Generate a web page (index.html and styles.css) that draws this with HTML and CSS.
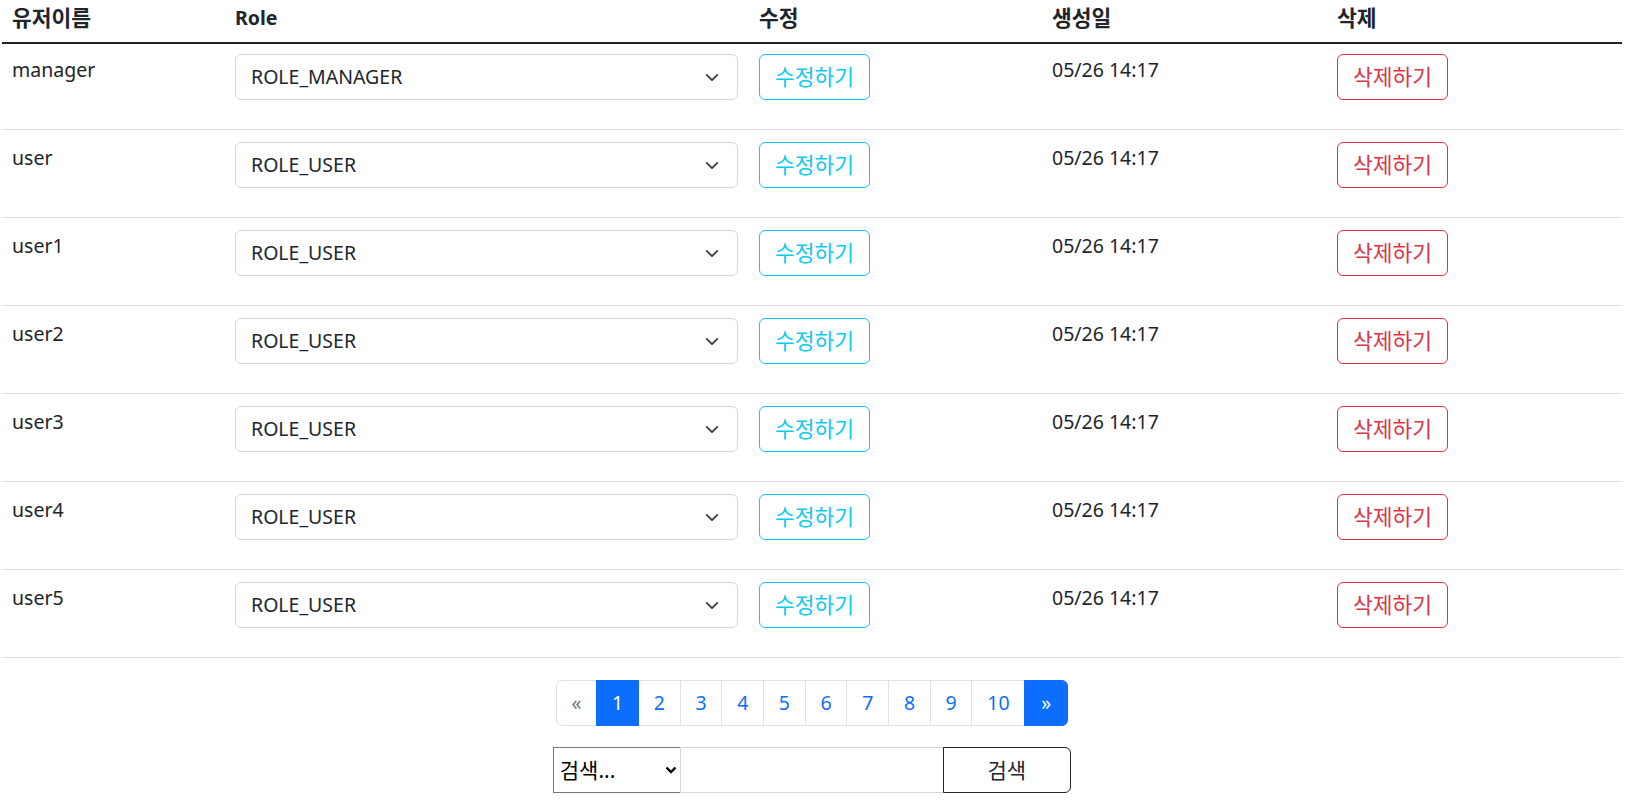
FILE: index.html
```html
<!DOCTYPE html>
<html lang="ko">
<head>
<meta charset="utf-8">
<title>유저 관리</title>
<link rel="stylesheet" href="styles.css">
</head>
<body>
<div class="page">
  <div class="users">
    <div class="users-head">
      <div class="cell ko">유저이름</div>
      <div class="cell">Role</div>
      <div class="cell ko">수정</div>
      <div class="cell ko">생성일</div>
      <div class="cell ko">삭제</div>
    </div>

    <div class="users-row">
      <div class="cell">manager</div>
      <div class="cell"><div class="select-wrap"><select class="role-select"><option>ROLE_MANAGER</option><option>ROLE_USER</option></select><svg class="chev" viewBox="0 0 16 10"><path d="M2 2l6 6 6-6"/></svg></div></div>
      <div class="cell"><button class="btn btn-info">수정하기</button></div>
      <div class="cell">05/26 14:17</div>
      <div class="cell"><button class="btn btn-danger">삭제하기</button></div>
    </div>

    <div class="users-row">
      <div class="cell">user</div>
      <div class="cell"><div class="select-wrap"><select class="role-select"><option>ROLE_USER</option><option>ROLE_MANAGER</option></select><svg class="chev" viewBox="0 0 16 10"><path d="M2 2l6 6 6-6"/></svg></div></div>
      <div class="cell"><button class="btn btn-info">수정하기</button></div>
      <div class="cell">05/26 14:17</div>
      <div class="cell"><button class="btn btn-danger">삭제하기</button></div>
    </div>

    <div class="users-row">
      <div class="cell">user1</div>
      <div class="cell"><div class="select-wrap"><select class="role-select"><option>ROLE_USER</option><option>ROLE_MANAGER</option></select><svg class="chev" viewBox="0 0 16 10"><path d="M2 2l6 6 6-6"/></svg></div></div>
      <div class="cell"><button class="btn btn-info">수정하기</button></div>
      <div class="cell">05/26 14:17</div>
      <div class="cell"><button class="btn btn-danger">삭제하기</button></div>
    </div>

    <div class="users-row">
      <div class="cell">user2</div>
      <div class="cell"><div class="select-wrap"><select class="role-select"><option>ROLE_USER</option><option>ROLE_MANAGER</option></select><svg class="chev" viewBox="0 0 16 10"><path d="M2 2l6 6 6-6"/></svg></div></div>
      <div class="cell"><button class="btn btn-info">수정하기</button></div>
      <div class="cell">05/26 14:17</div>
      <div class="cell"><button class="btn btn-danger">삭제하기</button></div>
    </div>

    <div class="users-row">
      <div class="cell">user3</div>
      <div class="cell"><div class="select-wrap"><select class="role-select"><option>ROLE_USER</option><option>ROLE_MANAGER</option></select><svg class="chev" viewBox="0 0 16 10"><path d="M2 2l6 6 6-6"/></svg></div></div>
      <div class="cell"><button class="btn btn-info">수정하기</button></div>
      <div class="cell">05/26 14:17</div>
      <div class="cell"><button class="btn btn-danger">삭제하기</button></div>
    </div>

    <div class="users-row">
      <div class="cell">user4</div>
      <div class="cell"><div class="select-wrap"><select class="role-select"><option>ROLE_USER</option><option>ROLE_MANAGER</option></select><svg class="chev" viewBox="0 0 16 10"><path d="M2 2l6 6 6-6"/></svg></div></div>
      <div class="cell"><button class="btn btn-info">수정하기</button></div>
      <div class="cell">05/26 14:17</div>
      <div class="cell"><button class="btn btn-danger">삭제하기</button></div>
    </div>

    <div class="users-row">
      <div class="cell">user5</div>
      <div class="cell"><div class="select-wrap"><select class="role-select"><option>ROLE_USER</option><option>ROLE_MANAGER</option></select><svg class="chev" viewBox="0 0 16 10"><path d="M2 2l6 6 6-6"/></svg></div></div>
      <div class="cell"><button class="btn btn-info">수정하기</button></div>
      <div class="cell">05/26 14:17</div>
      <div class="cell"><button class="btn btn-danger">삭제하기</button></div>
    </div>
  </div>

  <nav class="pager">
    <a class="page-link first disabled">«</a>
    <a class="page-link active">1</a>
    <a class="page-link">2</a>
    <a class="page-link">3</a>
    <a class="page-link">4</a>
    <a class="page-link">5</a>
    <a class="page-link">6</a>
    <a class="page-link">7</a>
    <a class="page-link">8</a>
    <a class="page-link">9</a>
    <a class="page-link wide">10</a>
    <a class="page-link last active">»</a>
  </nav>

  <form class="search">
    <div class="search-select-wrap">
      <select class="search-select"><option>검색...</option><option>유저이름</option></select>
      <svg class="search-chev" viewBox="0 0 12 8"><path d="M1.5 1.5l4.5 4.5 4.5-4.5"/></svg>
    </div>
    <input class="search-input" type="text">
    <button class="search-btn" type="button">검색</button>
  </form>
</div>
</body>
</html>
```
FILE: styles.css
```css
* { box-sizing: border-box; }

html, body {
  margin: 0;
  padding: 0;
  background: #fff;
}

body {
  font-family: "Noto Sans", "Noto Sans CJK KR", sans-serif;
  font-size: 19.5px;
  line-height: 30px;
  color: #212529;
}

.page {
  width: 1622px;
  padding-left: 2px;
}

.users-head,
.users-row {
  display: grid;
  grid-template-columns: 223px 524px 293px 285px 295px;
}

.users-head {
  height: 44px;
  border-bottom: 2px solid #212529;
  margin-bottom: -2px;
  font-weight: 700;
}

.users-head .cell {
  padding: 3px 10px 0;
}

.users-head .ko {
  font-size: 21.5px;
}

.users-row {
  height: 88px;
  border-bottom: 1px solid #dee2e6;
}

.users-row .cell {
  padding: 13px 10px 0;
}

.select-wrap {
  position: relative;
  width: 503px;
  margin-top: -1.5px;
}

.role-select {
  display: block;
  width: 100%;
  height: 46px;
  padding: 0 45px 0 15px;
  font: inherit;
  color: #212529;
  background: #fff;
  border: 1px solid #d3d7dc;
  border-radius: 6px;
  appearance: none;
  -webkit-appearance: none;
  outline: none;
}

.chev {
  position: absolute;
  right: 19px;
  top: 19px;
  width: 14px;
  height: 9px;
  pointer-events: none;
  fill: none;
  stroke: #343a40;
  stroke-width: 2;
  stroke-linecap: round;
  stroke-linejoin: round;
}

.btn {
  display: block;
  width: 111px;
  height: 46px;
  margin-top: -1.5px;
  padding: 0;
  font: inherit;
  font-size: 21.5px;
  line-height: 44px;
  text-align: center;
  background: #fff;
  border: 1px solid;
  border-radius: 6px;
  cursor: pointer;
}

.btn-info {
  color: #0dcaf0;
  border-color: #0dcaf0;
}

.btn-danger {
  color: #dc3545;
  border-color: #dc3545;
}

/* pagination */
.pager {
  display: flex;
  justify-content: center;
  margin-top: 21.5px;
  padding-right: 0.5px;
}

.page-link {
  display: block;
  width: 42.7px;
  height: 46px;
  margin-left: -1px;
  line-height: 44px;
  text-align: center;
  color: #0d6efd;
  background: #fff;
  border: 1px solid #dee2e6;
  text-decoration: none;
}

.page-link.first {
  width: 41.7px;
  margin-left: 0;
  border-radius: 6px 0 0 6px;
}

.page-link.wide {
  width: 54px;
}

.page-link.last {
  width: 43.4px;
  border-radius: 0 6px 6px 0;
}

.page-link.disabled {
  color: #6c757d;
}

.page-link.active {
  color: #fff;
  background: #0d6efd;
  border-color: #0d6efd;
  position: relative;
}

/* search */
.search {
  display: flex;
  justify-content: center;
  margin-top: 21px;
  padding-right: 0.5px;
}

.search-select-wrap {
  position: relative;
  width: 128px;
}

.search-select {
  display: block;
  width: 100%;
  height: 46px;
  padding: 0 24px 0 6px;
  font: inherit;
  font-size: 21px;
  color: #000;
  background: #fff;
  border: 1px solid #767676;
  border-radius: 0;
  appearance: none;
  -webkit-appearance: none;
  outline: none;
}

.search-chev {
  position: absolute;
  right: 4px;
  top: 19px;
  width: 12px;
  height: 8px;
  pointer-events: none;
  fill: none;
  stroke: #000;
  stroke-width: 2.4;
}

.search-input {
  width: 264px;
  height: 46px;
  margin-left: -1px;
  padding: 0 12px;
  font: inherit;
  border: 1px solid #d3d7dc;
  border-radius: 0;
  outline: none;
  position: relative;
}

.search-btn {
  width: 128px;
  height: 46px;
  margin-left: -1px;
  padding: 0;
  font: inherit;
  font-size: 21px;
  color: #212529;
  background: #fff;
  border: 1px solid #212529;
  border-radius: 0 6px 6px 0;
  position: relative;
  cursor: pointer;
}
```
